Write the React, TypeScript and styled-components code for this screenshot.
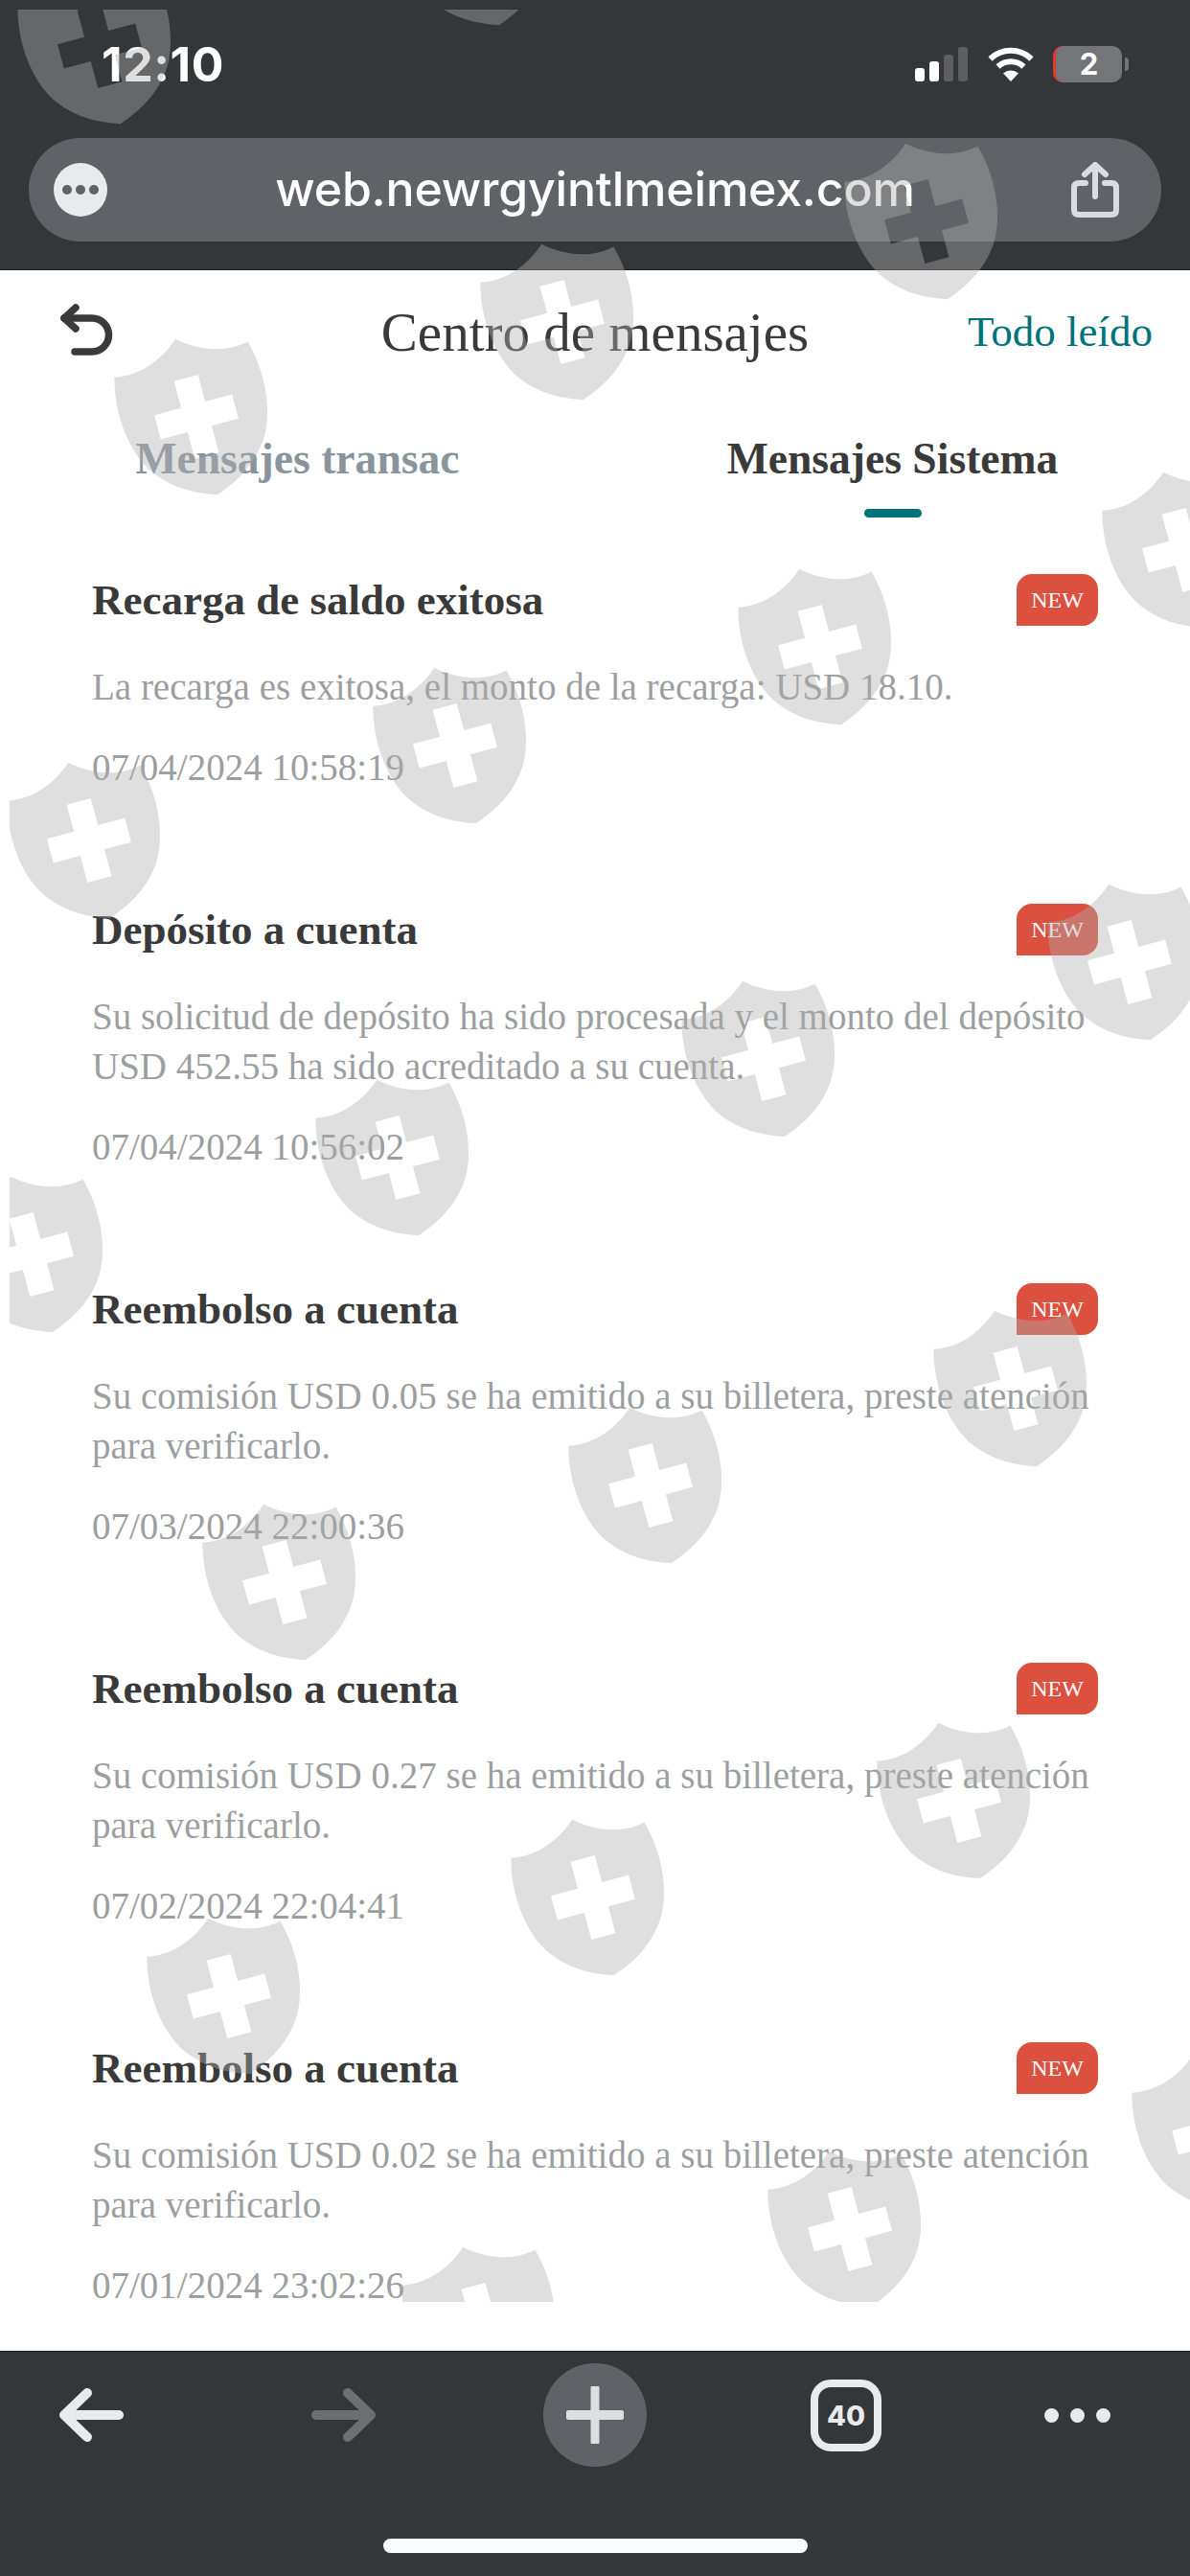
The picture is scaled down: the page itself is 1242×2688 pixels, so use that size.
import React from 'react'
import styled, { createGlobalStyle } from 'styled-components'

const GlobalStyle = createGlobalStyle`
  html, body {
    margin: 0;
    padding: 0;
    background: #fff;
    font-family: "Liberation Serif", serif;
  }
`

// 水印位置 (十字中心)
const marks = [
  [104, 48], [499, -55], [967, 231], [587, 336], [205, 435], [1236, 574],
  [856, 675], [475, 778], [93, 877], [1179, 1004], [797, 1105], [415, 1208],
  [33, 1309], [1060, 1449], [679, 1550], [297, 1651], [1001, 1879], [619, 1980],
  [239, 2083], [1267, 2225], [887, 2326], [505, 2426],
]

const messages = [
  { title: 'Recarga de saldo exitosa', body: ['La recarga es exitosa, el monto de la recarga: USD 18.10.'], time: '07/04/2024 10:58:19' },
  { title: 'Depósito a cuenta', body: ['Su solicitud de depósito ha sido procesada y el monto del depósito', 'USD 452.55 ha sido acreditado a su cuenta.'], time: '07/04/2024 10:56:02' },
  { title: 'Reembolso a cuenta', body: ['Su comisión USD 0.05 se ha emitido a su billetera, preste atención', 'para verificarlo.'], time: '07/03/2024 22:00:36' },
  { title: 'Reembolso a cuenta', body: ['Su comisión USD 0.27 se ha emitido a su billetera, preste atención', 'para verificarlo.'], time: '07/02/2024 22:04:41' },
  { title: 'Reembolso a cuenta', body: ['Su comisión USD 0.02 se ha emitido a su billetera, preste atención', 'para verificarlo.'], time: '07/01/2024 23:02:26' },
]

function SignalIcon() {
  return (
    <svg width="56" height="36" viewBox="0 0 56 36">
      <rect x="0" y="22" width="10" height="14" rx="3" fill="#fff" />
      <rect x="15" y="15" width="10" height="21" rx="3" fill="#fff" />
      <rect x="30" y="8" width="10" height="28" rx="3" fill="#5c5e61" />
      <rect x="45" y="0" width="10" height="36" rx="3" fill="#5c5e61" />
    </svg>
  )
}

function WifiIcon() {
  return (
    <svg width="48" height="36" viewBox="0 0 48 36">
      <path d="M2.5 12.5 A31 31 0 0 1 45.5 12.5" fill="none" stroke="#fff" strokeWidth="6" />
      <path d="M10.5 20.5 A20 20 0 0 1 37.5 20.5" fill="none" stroke="#fff" strokeWidth="6" />
      <path d="M16 27.5 A12 12 0 0 1 32 27.5 L24 36 Z" fill="#fff" />
    </svg>
  )
}

function ShareIcon() {
  return (
    <svg width="50" height="58" viewBox="0 0 50 58" fill="none" stroke="#d9dce1" strokeWidth="6" strokeLinecap="round" strokeLinejoin="round">
      <path d="M15 22 H8 Q3 22 3 27 V50 Q3 55 8 55 H42 Q47 55 47 50 V27 Q47 22 42 22 H35" />
      <path d="M25 36 V4 M14 13 L25 3 L36 13" />
    </svg>
  )
}

function BackIcon() {
  return (
    <svg width="56" height="56" viewBox="0 0 56 56" fill="none" stroke="#3a3a3a" strokeWidth="7.5" strokeLinecap="round" strokeLinejoin="round">
      <path d="M17 4 L5 15 L17 26" />
      <path d="M5 15 H34 A17.5 17.5 0 0 1 34 50 H16" />
    </svg>
  )
}

function ArrowIcon({ color, flip }: { color: string, flip?: boolean }) {
  return (
    <ArrowSvg $flip={flip} width="68" height="56" viewBox="0 0 68 56" fill="none" stroke={color} strokeWidth="10" strokeLinecap="round" strokeLinejoin="round">
      <path d="M30 5 L6 28 L30 51 M6 28 H63" />
    </ArrowSvg>
  )
}

function Watermark() {
  return (
    <MarkLayer>
      <svg width="1242" height="2392" viewBox="0 10 1242 2392">
        {marks.map(([x, y], i) => (
          <path
            key={i}
            transform={`translate(${x} ${y}) rotate(-15)`}
            fill="rgb(175,175,175)"
            fillOpacity="0.4"
            fillRule="evenodd"
            d="M0 -84 C18 -68 44 -56 72 -62 C82 -26 78 14 62 40 C46 64 24 76 0 84 C-24 76 -46 64 -62 40 C-78 14 -82 -26 -72 -62 C-44 -56 -18 -68 0 -84 Z
               M-13 -42 H13 V-13 H42 V13 H13 V42 H-13 V13 H-42 V-13 H-13 Z"
          />
        ))}
      </svg>
    </MarkLayer>
  )
}

function App() {
  return (
    <Page>
      <GlobalStyle />

      {/* 瀏覽器上方 */}
      <TopChrome>
        <StatusBar>
          <Clock>12:10</Clock>
          <StatusIcons>
            <SignalIcon />
            <WifiIcon />
            <Battery>
              <BatteryBody>2</BatteryBody>
              <BatteryNub />
            </Battery>
          </StatusIcons>
        </StatusBar>
        <UrlBar>
          <MenuDots>
            <i /><i /><i />
          </MenuDots>
          <UrlText>web.newrgyintlmeimex.com</UrlText>
          <ShareIcon />
        </UrlBar>
      </TopChrome>

      {/* 主要內容 */}
      <Content>
        <NavRow>
          <BackButton><BackIcon /></BackButton>
          <NavTitle>Centro de mensajes</NavTitle>
          <ReadAll>Todo leído</ReadAll>
        </NavRow>

        <Tabs>
          <Tab>Mensajes transac</Tab>
          <Tab $active>Mensajes Sistema</Tab>
        </Tabs>

        <MessageList>
          {messages.map((m, i) => (
            <Message key={i}>
              <MessageHead>
                <MessageTitle>{m.title}</MessageTitle>
                <NewBadge>NEW</NewBadge>
              </MessageHead>
              <MessageBody>
                {m.body.map((line) => <div key={line}>{line}</div>)}
              </MessageBody>
              <MessageTime>{m.time}</MessageTime>
            </Message>
          ))}
        </MessageList>
      </Content>

      {/* 瀏覽器下方 */}
      <BottomChrome>
        <ToolRow>
          <ArrowIcon color="#e8eaed" />
          <ArrowIcon color="#6d6f72" flip />
          <PlusButton>
            <svg width="60" height="60" viewBox="0 0 60 60" stroke="#dcdee2" strokeLinecap="round">
              <path d="M30 2 V58" strokeWidth="9" />
              <path d="M3 30 H57" strokeWidth="10" />
            </svg>
          </PlusButton>
          <TabCount>40</TabCount>
          <MoreDots>
            <i /><i /><i />
          </MoreDots>
        </ToolRow>
        <HomeBar />
      </BottomChrome>

      <Watermark />
    </Page>
  )
}

export default App

// styled
const Page = styled.div`
  width: 1242px;
  height: 2688px;
  display: flex;
  flex-direction: column;
  position: relative;
  overflow: hidden;
  background: #fff;
`

const TopChrome = styled.div`
  height: 282px;
  flex: none;
  box-sizing: border-box;
  background: #34373a;
  border-bottom: 1px solid #1b1c1e;
  padding: 37px 30px 0;
`

const StatusBar = styled.div`
  height: 60px;
  display: flex;
  justify-content: space-between;
  align-items: center;
  padding: 0 0 0 76px;
  margin-bottom: 47px;
`

const Clock = styled.div`
  font-family: Inter, sans-serif;
  font-size: 50px;
  font-weight: 700;
  color: #fff;
  letter-spacing: 0.6px;
`

const StatusIcons = styled.div`
  display: flex;
  align-items: center;
  gap: 20px;
  padding-right: 34px;
`

const Battery = styled.div`
  display: flex;
  align-items: center;
  gap: 3px;
`

const BatteryBody = styled.div`
  width: 72px;
  height: 38px;
  box-sizing: border-box;
  border-radius: 10px;
  border-left: 3px solid #e5392c;
  background: #737578;
  color: #fff;
  font-family: Inter, sans-serif;
  font-size: 31px;
  font-weight: 700;
  line-height: 38px;
  text-align: center;
`

const BatteryNub = styled.div`
  width: 4px;
  height: 14px;
  background: #737578;
  border-radius: 0 4px 4px 0;
`

const UrlBar = styled.div`
  height: 108px;
  display: flex;
  align-items: center;
  justify-content: space-between;
  padding: 0 44px 0 26px;
  border-radius: 54px;
  background: #5f6367;
`

const MenuDots = styled.div`
  width: 56px;
  height: 56px;
  border-radius: 50%;
  background: #e8eaed;
  display: flex;
  align-items: center;
  justify-content: center;
  gap: 4px;
  i {
    width: 10px;
    height: 10px;
    border-radius: 50%;
    background: #5f6367;
  }
`

const UrlText = styled.div`
  font-family: Inter, sans-serif;
  font-size: 50px;
  font-weight: 500;
  color: #fff;
  letter-spacing: -0.2px;
  margin-left: 12px;
  margin-top: -2px;
`

const Content = styled.div`
  flex: 1;
  min-height: 0;
  overflow: hidden;
  background: #fff;
`

const NavRow = styled.div`
  height: 128px;
  position: relative;
  display: flex;
  align-items: center;
  justify-content: center;
`

const BackButton = styled.div`
  position: absolute;
  left: 62px;
  top: 35px;
  line-height: 0;
`

const NavTitle = styled.div`
  font-size: 57px;
  color: #3a3a3a;
`

const ReadAll = styled.div`
  position: absolute;
  right: 39px;
  top: 38px;
  font-size: 45px;
  color: #00737a;
`

const Tabs = styled.div`
  display: grid;
  grid-template-columns: 1fr 1fr;
  height: 130px;
`

const Tab = styled.div<{ $active?: boolean }>`
  position: relative;
  text-align: center;
  font-size: 45.6px;
  font-weight: 700;
  line-height: 50px;
  padding-top: 44px;
  color: ${(p) => (p.$active ? '#3a3a3a' : '#8a949d')};
  ${(p) => p.$active && `
    &::after {
      content: '';
      position: absolute;
      left: 50%;
      top: 121px;
      width: 60px;
      height: 9px;
      margin-left: -30px;
      border-radius: 5px;
      background: #00737a;
    }
  `}
`

const MessageList = styled.div`
  padding: 59px 96px 0;
`

const Message = styled.div`
  padding: 0 0 116px;
`

const MessageHead = styled.div`
  display: flex;
  justify-content: space-between;
  align-items: center;
  height: 54px;
  margin-bottom: 38px;
`

const MessageTitle = styled.div`
  font-size: 45px;
  font-weight: 700;
  color: #3a3a3a;
`

const NewBadge = styled.div`
  width: 85px;
  height: 54px;
  border-radius: 16px 16px 16px 0;
  background: #dc5040;
  color: #fff;
  font-size: 24px;
  line-height: 54px;
  text-align: center;
`

const MessageBody = styled.div`
  font-size: 39px;
  line-height: 52px;
  color: #9c9f9f;
  margin-bottom: 32px;
`

const MessageTime = styled.div`
  font-size: 39px;
  line-height: 52px;
  color: #9c9f9f;
`

const BottomChrome = styled.div`
  height: 235px;
  flex: none;
  box-sizing: border-box;
  background: #34373a;
  border-top: 1px solid #1b1c1e;
  display: flex;
  flex-direction: column;
`

const ToolRow = styled.div`
  height: 120px;
  margin-top: 6px;
  padding-left: 61px;
  display: grid;
  grid-template-columns: 264px 242px 279px 244px auto;
  align-items: center;
`

const ArrowSvg = styled.svg<{ $flip?: boolean }>`
  transform: ${(p) => (p.$flip ? 'scaleX(-1)' : 'none')};
`

const PlusButton = styled.div`
  width: 108px;
  height: 108px;
  border-radius: 50%;
  background: #5f6367;
  display: flex;
  align-items: center;
  justify-content: center;
`

const TabCount = styled.div`
  width: 74px;
  height: 75px;
  box-sizing: border-box;
  border: 8px solid #e8eaed;
  border-radius: 21px;
  color: #e8eaed;
  font-family: Inter, sans-serif;
  font-size: 29px;
  font-weight: 800;
  line-height: 59px;
  text-align: center;
`

const MoreDots = styled.div`
  display: flex;
  gap: 12px;
  i {
    width: 15px;
    height: 15px;
    border-radius: 50%;
    background: #e8eaed;
  }
`

const HomeBar = styled.div`
  width: 443px;
  height: 15px;
  margin: 69px auto 0;
  border-radius: 8px;
  background: #fcfcfc;
`

const MarkLayer = styled.div`
  position: absolute;
  left: 10px;
  top: 10px;
  width: 1232px;
  height: 2392px;
  overflow: hidden;
  pointer-events: none;
  svg {
    display: block;
    margin-left: -10px;
  }
`
